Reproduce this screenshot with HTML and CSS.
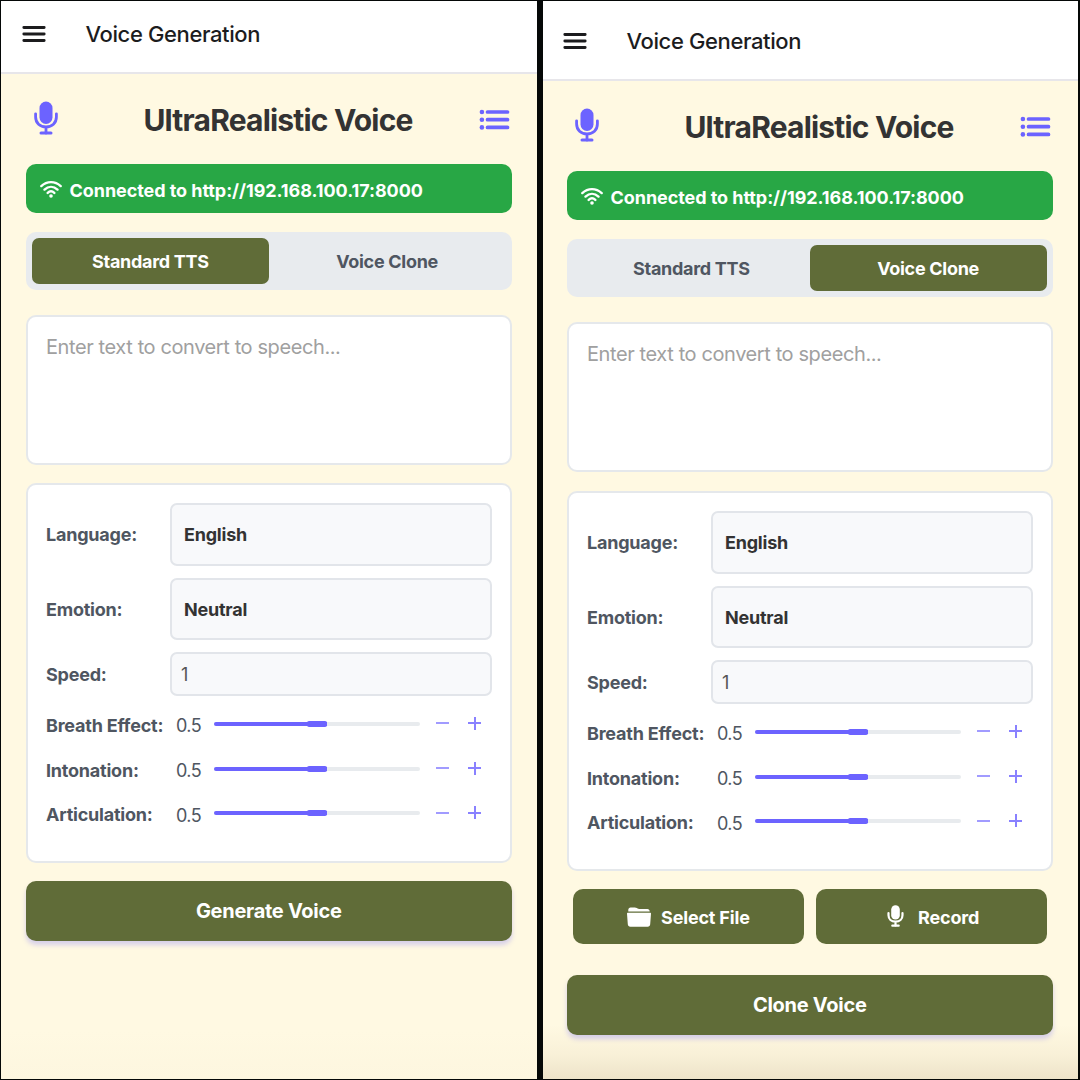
FILE: index.html
```html
<!DOCTYPE html>
<html lang="en">
<head>
<meta charset="utf-8">
<title>Voice Generation</title>
<link rel="stylesheet" href="styles.css">
</head>
<body>
<svg width="0" height="0" class="sprite">
  <symbol id="menu" viewBox="0 0 24 18"><path d="M1.8 2.5h20.4M1.8 9h20.4M1.8 15.500h20.4" stroke="currentColor" stroke-width="2.8" stroke-linecap="round"/></symbol>
  <symbol id="mic" viewBox="0 0 24 34"><rect x="5.5" y="0.5" width="13" height="22.5" rx="6.5" fill="currentColor"/><path d="M1.6 12.8v3.2c0 6 4.4 9.9 10.4 9.9s10.4-3.9 10.4-9.9v-3.2M12 26v6" fill="none" stroke="currentColor" stroke-width="2.8" stroke-linecap="round"/><path d="M7 32h10" stroke="currentColor" stroke-width="3" stroke-linecap="round"/></symbol>
  <symbol id="mini-mic" viewBox="0 0 17 22"><rect x="4.200" y="0.200" width="8.600" height="14.300" rx="4.300" fill="currentColor"/><path d="M1.500 8v2.200c0 4 2.900 6.500 7 6.500s7-2.500 7-6.500V8M8.500 16.500v4" fill="none" stroke="currentColor" stroke-width="2.200" stroke-linecap="round"/><path d="M5.300 20.700h6.400" stroke="currentColor" stroke-width="2.200" stroke-linecap="round"/></symbol>
  <symbol id="list" viewBox="0 0 30 22"><g fill="currentColor"><circle cx="2.4" cy="3" r="2.3"/><circle cx="2.4" cy="10.7" r="2.3"/><circle cx="2.4" cy="18.4" r="2.3"/></g><path d="M8 3h20M8 10.7h20M8 18.4h20" stroke="currentColor" stroke-width="3.7" stroke-linecap="round"/></symbol>
  <symbol id="wifi" viewBox="0 0 22 18"><path d="M1.3 6.100c5.600-5.300 13.800-5.300 19.400 0M4.500 9.600c3.900-3.600 9.100-3.600 13 0M7.700 12.900c2-1.900 4.600-1.900 6.600 0" fill="none" stroke="currentColor" stroke-width="2.400" stroke-linecap="round"/><circle cx="11" cy="16" r="1.800" fill="currentColor"/></symbol>
  <symbol id="folder" viewBox="0 0 24 20"><path d="M1.300 4.600V2.800C1.300 1.500 2.200.5 3.600.5h4.300c.8 0 1.300.2 1.900.6l.8.5c.5.3.9.4 1.500.4h8.300c1.300 0 2.300 1 2.300 2.300v.3zM.6 5.700h22.800c.4 0 .6.300.6.700l-.8 10.800c-.1 1.500-1.100 2.500-2.500 2.500H3.300c-1.400 0-2.400-1-2.500-2.500L0 6.400C0 6 .2 5.700.6 5.700z" fill="currentColor"/></symbol>
</svg>
<main class="screens">
  <section class="screen first">
    <header class="bar"><svg class="menu"><use href="#menu"/></svg><span class="bar-title">Voice Generation</span></header>
    <div class="content">
      <div class="heading"><svg class="mic"><use href="#mic"/></svg><h1>UltraRealistic Voice</h1><svg class="list"><use href="#list"/></svg></div>
      <div class="status"><svg class="wifi"><use href="#wifi"/></svg><span>Connected to http://192.168.100.17:8000</span></div>
      <div class="tabs"><div class="tab active">Standard TTS</div><div class="tab">Voice Clone</div></div>
      <div class="input">Enter text to convert to speech...</div>
      <div class="card">
        <div class="field"><label>Language:</label><div class="select">English</div></div>
        <div class="field"><label>Emotion:</label><div class="select">Neutral</div></div>
        <div class="field"><label>Speed:</label><div class="number">1</div></div>
        <div class="range"><label>Breath Effect:</label><span class="value">0.5</span><i class="track"><i class="fill"></i><i class="thumb"></i></i><i class="minus"></i><i class="plus"></i></div>
        <div class="range"><label>Intonation:</label><span class="value">0.5</span><i class="track"><i class="fill"></i><i class="thumb"></i></i><i class="minus"></i><i class="plus"></i></div>
        <div class="range"><label>Articulation:</label><span class="value">0.5</span><i class="track"><i class="fill"></i><i class="thumb"></i></i><i class="minus"></i><i class="plus"></i></div>
      </div>
      <div class="primary">Generate Voice</div>
    </div>
  </section>
  <section class="screen second">
    <header class="bar"><svg class="menu"><use href="#menu"/></svg><span class="bar-title">Voice Generation</span></header>
    <div class="content">
      <div class="heading"><svg class="mic"><use href="#mic"/></svg><h1>UltraRealistic Voice</h1><svg class="list"><use href="#list"/></svg></div>
      <div class="status"><svg class="wifi"><use href="#wifi"/></svg><span>Connected to http://192.168.100.17:8000</span></div>
      <div class="tabs"><div class="tab">Standard TTS</div><div class="tab active">Voice Clone</div></div>
      <div class="input">Enter text to convert to speech...</div>
      <div class="card">
        <div class="field"><label>Language:</label><div class="select">English</div></div>
        <div class="field"><label>Emotion:</label><div class="select">Neutral</div></div>
        <div class="field"><label>Speed:</label><div class="number">1</div></div>
        <div class="range"><label>Breath Effect:</label><span class="value">0.5</span><i class="track"><i class="fill"></i><i class="thumb"></i></i><i class="minus"></i><i class="plus"></i></div>
        <div class="range"><label>Intonation:</label><span class="value">0.5</span><i class="track"><i class="fill"></i><i class="thumb"></i></i><i class="minus"></i><i class="plus"></i></div>
        <div class="range"><label>Articulation:</label><span class="value">0.5</span><i class="track"><i class="fill"></i><i class="thumb"></i></i><i class="minus"></i><i class="plus"></i></div>
      </div>
      <div class="actions"><div class="action"><svg class="folder"><use href="#folder"/></svg><span>Select File</span></div><div class="action"><svg class="mini-mic"><use href="#mini-mic"/></svg><span>Record</span></div></div>
      <div class="primary">Clone Voice</div>
    </div>
  </section>
</main>
</body>
</html>
```
FILE: styles.css
```css
* { box-sizing: border-box; }
body { margin: 0; background: #050807; font-family: Inter, "Liberation Sans", sans-serif; color: #333; }
.sprite { display: block; }
.screens { display: grid; grid-template-columns: 536px 535px; column-gap: 6px; width: 1080px; height: 1080px; padding: 1px; }
.screen { height: 1078px; overflow: hidden; background: linear-gradient(#fff9e2 0, #fff9e2 1030px, #fdf6df 1078px); }
.second { background: linear-gradient(#fff9e2 0, #fff9e2 1024px, #f8f0d7 1055px, #ede3c9 1078px); }
.bar { display: flex; align-items: center; height: 73px; padding: 0 21px 5px 20.5px; background: #fff; border-bottom: 2px solid #e7e6ea; }
.second .bar { height: 80px; padding: 2px 20px 0 19.5px; }
.menu { width: 24px; height: 18px; color: #1c1c1e; }
.bar-title { margin-left: 40px; font-size: 22px; font-weight: 500; line-height: 30px; color: #1c1c1e; letter-spacing: -0.38px; }
.content { padding: 0 25.5px 0 25px; }
.second .content { padding-left: 24px; }
.heading { display: flex; align-items: center; height: 90px; padding: 2px 1.5px 0 7px; }
.mic { width: 26px; height: 34px; color: #6c63ff; margin-top: -4px; }
.list { width: 31px; height: 22px; color: #6c63ff; }
h1 { flex: 1; margin: 0; padding-left: 18px; text-align: center; font-size: 30px; line-height: 40px; font-weight: 700; letter-spacing: -0.8px; }
.status { display: flex; align-items: center; gap: 7.5px; height: 49px; padding: 3px 14px 0; border-radius: 10px; background: #28a745; color: #fff; font-size: 18px; font-weight: 700; letter-spacing: -0.06px; }
.wifi { width: 22px; height: 18px; margin-top: -3px; }
.tabs { display: flex; margin-top: 19px; height: 58px; padding: 6px; background: #e8ebee; border-radius: 10px; }
.tab { flex: 1; display: flex; align-items: center; justify-content: center; border-radius: 7px; font-size: 18px; font-weight: 700; letter-spacing: -0.3px; color: #4f5661; }
.tab.active { background: #606c38; color: #fff; }
.input { margin-top: 25px; height: 150px; padding: 17px 18px; border: 2px solid #e5e8eb; border-radius: 10px; background: #fff; font-size: 20px; line-height: 26px; letter-spacing: -0.4px; color: #a0a0a0; }
.card { margin-top: 18px; height: 380px; padding: 18px; border: 2px solid #e5e8eb; border-radius: 10px; background: #fff; font-size: 18px; letter-spacing: -0.22px; }
.second .card { margin-top: 19px; }
.field { display: flex; align-items: center; margin-bottom: 12px; }
.field:nth-child(3) { margin-bottom: 6px; }
label { width: 124px; padding-top: 1px; font-weight: 700; color: #4f5661; white-space: nowrap; }
.select, .number { flex: 1; display: flex; align-items: center; border: 2px solid #e2e5ea; border-radius: 7px; background: #f8f9fb; }
.select { height: 62.5px; padding: 1px 0 0 12px; font-weight: 700; }
.number { height: 43.5px; padding: 1px 0 0 9px; color: #555; }
.range { display: flex; align-items: center; height: 44.8px; color: #4f5661; }
.range label { width: 130px; padding-top: 3px; }
.value { width: 38px; padding-top: 4px; letter-spacing: -0.6px; }
.track { position: relative; width: 206px; height: 4px; border-radius: 2px; background: #e8ebee; }
.fill { display: block; width: 113px; height: 4px; border-radius: 2px 0 0 2px; background: #6c63ff; }
.thumb { position: absolute; left: 93px; top: -1px; width: 20px; height: 6px; border-radius: 2px; background: #6c63ff; }
.minus { width: 13px; height: 2px; margin: -1px 0 0 16px; background: #a19bff; }
.plus { width: 13px; height: 13px; margin: -1px 0 0 19px; background: linear-gradient(#8981ff, #8981ff) center / 13px 2px no-repeat, linear-gradient(#8981ff, #8981ff) center / 2px 13px no-repeat; }
.primary { display: flex; align-items: center; justify-content: center; margin-top: 18px; height: 60px; border-radius: 10px; background: #606c38; color: #fff; font-size: 20px; font-weight: 700; letter-spacing: -0.28px; box-shadow: 0 4px 5px rgba(108, 99, 255, 0.28); }
.actions { display: flex; gap: 12px; margin-top: 18px; padding: 0 6px; height: 55px; }
.action { flex: 1; display: flex; align-items: center; justify-content: center; padding-top: 2px; border-radius: 10px; background: #606c38; color: #fff; font-size: 18px; font-weight: 700; letter-spacing: -0.18px; }
.folder { width: 24px; height: 20px; margin: -2px 10px 0 0; }
.mini-mic { width: 17px; height: 22px; margin: -3px 14px 0 4px; }
.second .primary { margin-top: 31px; }
```
